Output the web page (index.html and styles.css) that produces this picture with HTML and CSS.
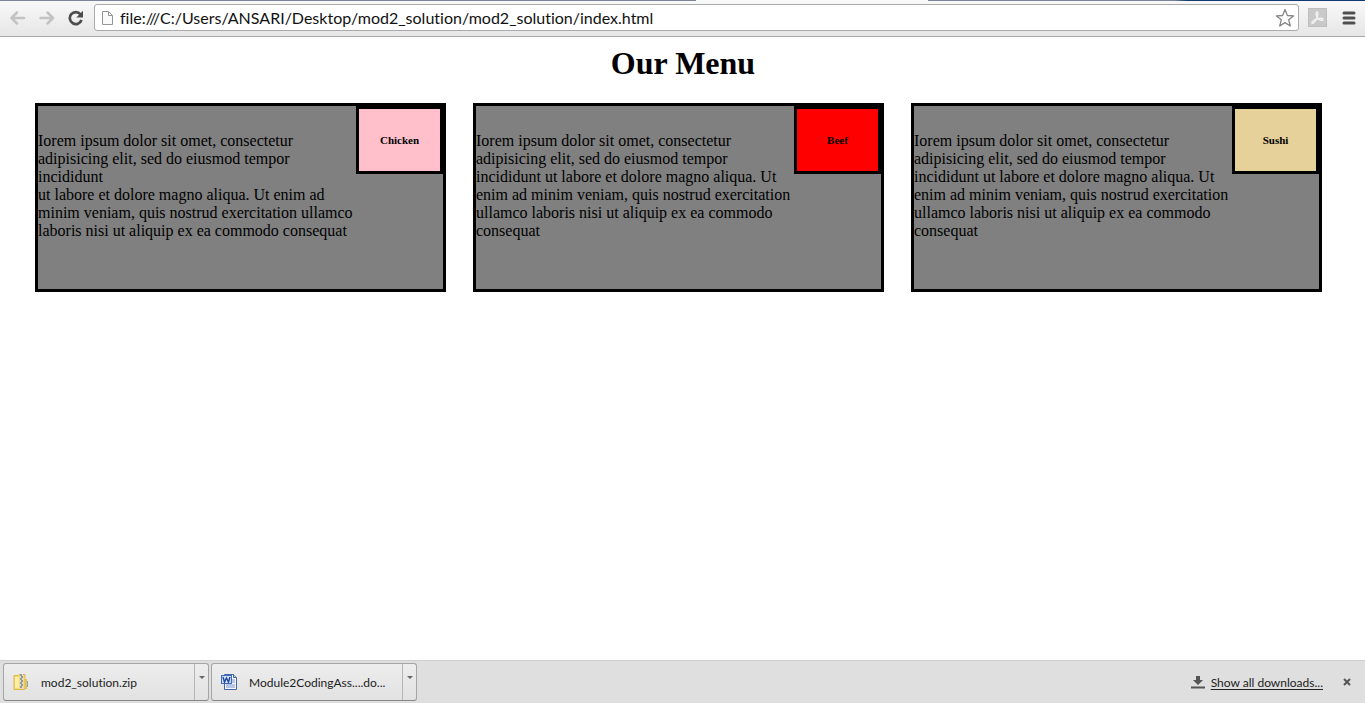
FILE: index.html
```html
<!DOCTYPE html>
<html lang="en">
<head>
<meta charset="utf-8">
<title>Our Menu</title>
<link rel="stylesheet" href="styles.css">
</head>
<body>
<div class="window">
  <header class="toolbar">
    <div class="navigation">
      <button class="nav-button" aria-label="Back"><svg width="18" height="16" viewBox="0 0 18 16"><path d="M8 2.500 2.500 8 8 13.500M3 8h12" fill="none" stroke="#c3c3c3" stroke-width="2.500" stroke-linecap="round" stroke-linejoin="round"/></svg></button>
      <button class="nav-button" aria-label="Forward"><svg width="18" height="16" viewBox="0 0 18 16"><path d="M9.500 2.500 15 8l-5.500 5.500M14.500 8h-12" fill="none" stroke="#c3c3c3" stroke-width="2.500" stroke-linecap="round" stroke-linejoin="round"/></svg></button>
      <button class="nav-button" aria-label="Reload"><svg width="18" height="16" viewBox="0 0 18 16"><path d="M13.500 4.300A6 6 0 1 0 14.500 10" fill="none" stroke="#4d4d4d" stroke-width="2.700"/><path d="M16 .8V7.500H9.300z" fill="#4d4d4d"/></svg></button>
    </div>
    <div class="omnibox">
      <svg class="page-icon" width="13" height="16" viewBox="0 0 13 16"><path d="M1.500 1.500h6l4 4v9h-10zM7.500 1.500v4h4" fill="#fafafa" stroke="#959595"/></svg>
      <input class="address" type="text" aria-label="Address" value="file:///C:/Users/ANSARI/Desktop/mod2_solution/mod2_solution/index.html">
      <button class="icon-button" aria-label="Bookmark this page"><svg width="20" height="20" viewBox="0 0 20 20"><path d="M10 1.500l2.400 6 6.100.4-4.800 3.900 1.600 6.200L10 14.600 4.700 18l1.600-6.200L1.500 7.900l6.100-.4z" fill="#fff" stroke="#858585" stroke-width="1.300" stroke-linejoin="round"/></svg></button>
    </div>
    <div class="tools">
      <button class="icon-button" aria-label="PDF extension"><svg width="19" height="19" viewBox="0 0 19 19"><path d="M0 0h19v19H0z" fill="#bebebe"/><path d="M1 1h17v17H1z" fill="#c9c9c9"/><path d="M4 15c-1-1 2-3 5-4 4-1 6-1 6 .5s-3 1-5-1C8 8 7.500 4 9 4s1 4-.5 7S5 16 4 15z" fill="none" stroke="#f2f2f2" stroke-width="1.400"/></svg></button>
      <button class="icon-button" aria-label="Menu"><svg width="14" height="14" viewBox="0 0 14 14"><path d="M2 2h10M2 7h10M2 12h10" stroke="#505050" stroke-width="3" stroke-linecap="round"/></svg></button>
    </div>
  </header>

  <main class="page">
    <h1 class="title">Our Menu</h1>
    <div class="menu">
      <section class="card">
        <h2 class="tag tag-chicken">Chicken</h2>
        <p class="text">Iorem ipsum dolor sit omet, consectetur adipisicing elit, sed do eiusmod tempor incididunt<br>ut labore et dolore magno aliqua. Ut enim ad minim veniam, quis nostrud exercitation ullamco laboris nisi ut aliquip ex ea commodo consequat</p>
      </section>
      <section class="card">
        <h2 class="tag tag-beef">Beef</h2>
        <p class="text">Iorem ipsum dolor sit omet, consectetur adipisicing elit, sed do eiusmod tempor incididunt ut labore et dolore magno aliqua. Ut enim ad minim veniam, quis nostrud exercitation ullamco laboris nisi ut aliquip ex ea commodo consequat</p>
      </section>
      <section class="card">
        <h2 class="tag tag-sushi">Sushi</h2>
        <p class="text">Iorem ipsum dolor sit omet, consectetur adipisicing elit, sed do eiusmod tempor incididunt ut labore et dolore magno aliqua. Ut enim ad minim veniam, quis nostrud exercitation ullamco laboris nisi ut aliquip ex ea commodo consequat</p>
      </section>
    </div>
  </main>

  <footer class="downloads">
    <div class="download">
      <button class="file">
        <svg width="16" height="18" viewBox="0 0 16 18"><path d="M1 2.500h4l1-1h6v15H1z" fill="#f5d971" stroke="#dcb64a"/><path d="M2 4h4v11H2z" fill="#fdeda6"/><path d="M7 1h3v15H7z" fill="#d8dce2"/><path d="M7 2h2M8 4h2M7 6h2M8 8h2M7 10h2M8 12h2M7 14h2" stroke="#4c596b"/><path d="M12 6h2v10h-2z" fill="#e9c04f"/><path d="M14.500 8v6" stroke="#6eaed0"/></svg>
        <span>mod2_solution.zip</span>
      </button>
      <button class="more" aria-label="Options for mod2_solution.zip"></button>
    </div>
    <div class="download">
      <button class="file">
        <svg width="16" height="18" viewBox="0 0 16 18"><path d="M3.500 1.500h9l3 3v12h-12z" fill="#f4f8ff" stroke="#4564a1"/><path d="M12.500 1.500v3h3" fill="#b9cbea" stroke="#4564a1"/><path d="M11 7h3M11 9h3M5 12h9M5 14h9" stroke="#7894c8"/><path d="M0 2h11v9H0z" fill="#3f6cc0"/><path d="M1 3h9v7H1z" fill="#cfdef7"/><path d="M2 4l1.500 5 2-4 2 4L9 4" fill="none" stroke="#244b9a" stroke-width="1.400"/></svg>
        <span>Module2CodingAss....do...</span>
      </button>
      <button class="more" aria-label="Options for Module2CodingAss"></button>
    </div>
    <div class="all-downloads">
      <svg width="14" height="14" viewBox="0 0 14 14"><path d="M5 1h4v4h3L7 10 2 5h3zM0 11.500h14v2H0z" fill="#555"/></svg>
      <a class="show-all" href="#">Show all downloads...</a>
      <button class="close" aria-label="Close downloads bar"><svg width="8" height="8" viewBox="0 0 8 8"><path d="M1 1l6 6M7 1L1 7" stroke="#555" stroke-width="2"/></svg></button>
    </div>
  </footer>
</div>
</body>
</html>
```
FILE: styles.css
```css
* { box-sizing: border-box; }
body { margin: 0; background: #fff; color: #000; font-family: "Liberation Serif", "Times New Roman", serif; }
button { padding: 0; border: 0; background: none; font: inherit; color: inherit; }
svg { display: block; flex: none; }

.window { display: flex; flex-direction: column; min-height: 100vh; font-variant-ligatures: none; }

.toolbar {
  display: flex;
  align-items: center;
  gap: 9px;
  height: 37px;
  padding: 0 9px 1px;
  border-bottom: 1px solid #a9a9a9;
  background:
    linear-gradient(90deg, #7c8598 51%, #f9f9f9 51%, #f9f9f9 68%, #7c8598 68%, #7c8598 86%, #123a6e 87%) top / 100% 1px no-repeat,
    linear-gradient(#f9f9f9, #e6e6e6);
}
.navigation { display: flex; gap: 11px; }
.nav-button { width: 18px; }
.tools { display: flex; align-items: center; gap: 15px; }
.omnibox {
  display: flex;
  flex: 1;
  align-items: center;
  height: 27px;
  padding: 0 3px 0 6px;
  border: 1px solid #aaa;
  border-radius: 3px;
  background: #fff;
}
.address {
  flex: 1;
  min-width: 0;
  padding: 0 6px;
  border: 0;
  background: none;
  font: 16px Lato, "Open Sans", sans-serif;
  font-variant-ligatures: none;
  color: #111;
}

.page { flex: 1; padding: 8px 43px 0 35px; }
.title { margin: 0; padding-left: 9px; font-size: 32px; line-height: 37px; text-align: center; }
.menu { display: grid; grid-template-columns: repeat(3, 1fr); gap: 27px; margin-top: 21px; }
.card { min-height: 189px; border: 3px solid #000; background: #808080; }
.tag {
  float: right;
  width: 87px;
  margin: 0;
  border: 3px solid #000;
  font-size: 11px;
  line-height: 62px;
  text-align: center;
}
.tag-chicken { background: #ffc0cb; }
.tag-beef { background: #f00; }
.tag-sushi { background: #e5d199; }
.text { width: 79%; margin: 26px 0 0; font-size: 16px; line-height: 18px; }

.downloads {
  display: flex;
  align-items: center;
  gap: 2px;
  height: 43px;
  padding: 0 14px 0 3px;
  border-top: 1px solid #d0d0d0;
  background: #dfdfdf;
  font-family: Lato, "Open Sans", sans-serif;
  font-size: 12px;
  color: #222;
}
.download {
  display: flex;
  width: 206px;
  height: 38px;
  border: 1px solid #a5a5a5;
  border-bottom-color: #888;
  border-radius: 3px;
  background: linear-gradient(#ededed, #e2e2e2);
}
.file { display: flex; flex: 1; align-items: center; gap: 12px; padding-left: 9px; font-variant-ligatures: none; }
.more { display: flex; justify-content: center; width: 14px; padding-top: 12px; border-left: 1px solid #b5b5b5; }
.more::before { content: ""; border: 3px solid transparent; border-top-color: #666; }
.all-downloads { display: flex; align-items: center; gap: 6px; margin-left: auto; }
.show-all { color: #222; text-underline-offset: 2px; }
.close { margin-left: 14px; }
```
